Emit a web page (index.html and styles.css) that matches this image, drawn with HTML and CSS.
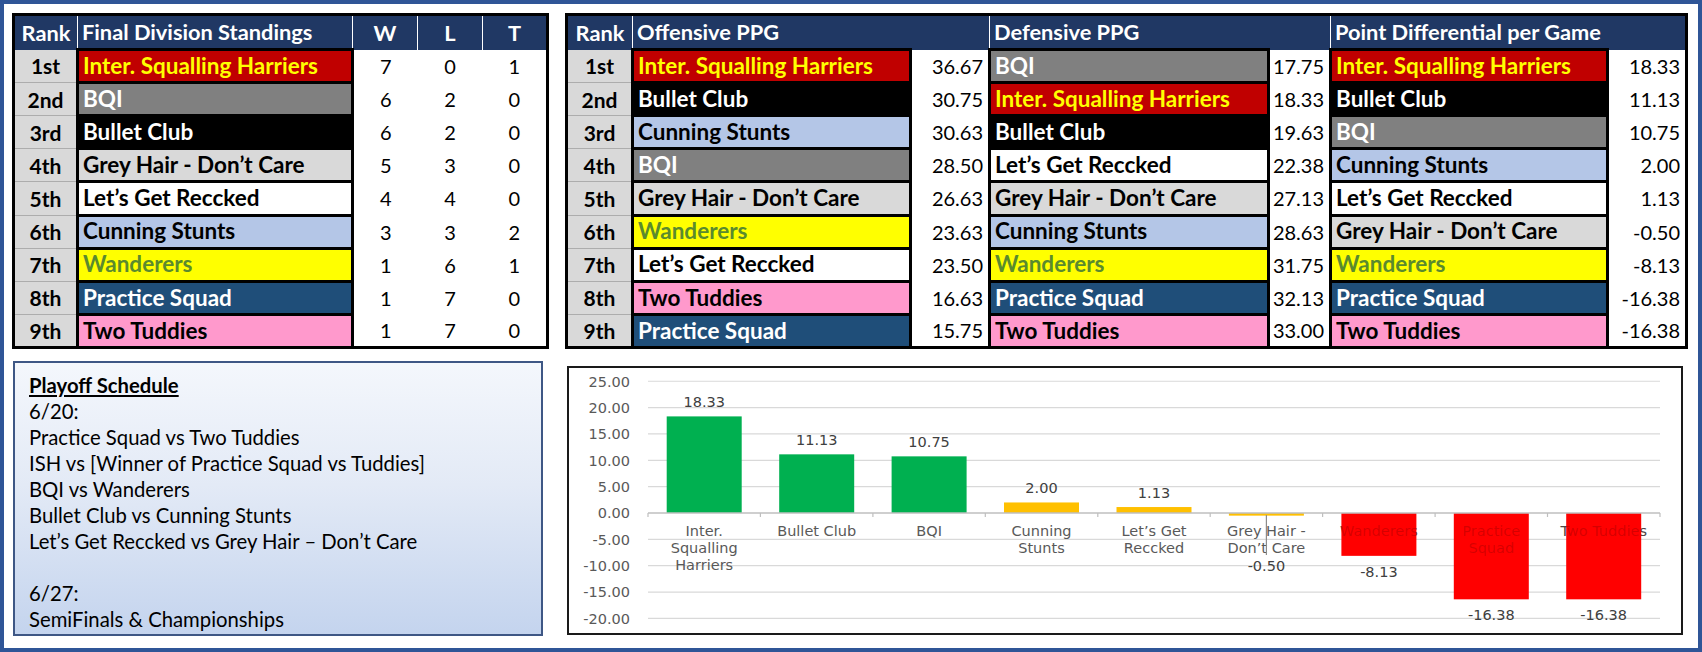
FILE: index.html
```html
<!DOCTYPE html>
<html>
<head>
<meta charset="utf-8">
<link rel="stylesheet" href="styles.css">
</head>
<body>
<div class="frame">
  <div class="layout">
    <table class="tbl standings">
      <colgroup><col class="c-rank"><col class="c-team"><col class="c-w"><col class="c-w"><col class="c-w"></colgroup>
      <thead>
        <tr><th class="h-rank">Rank</th><th class="h-left">Final Division Standings</th><th>W</th><th>L</th><th>T</th></tr>
      </thead>
      <tbody>
        <tr><td class="rank">1st</td><td class="team ish">Inter. Squalling Harriers</td><td class="num">7</td><td class="num">0</td><td class="num">1</td></tr>
        <tr><td class="rank">2nd</td><td class="team bqi">BQI</td><td class="num">6</td><td class="num">2</td><td class="num">0</td></tr>
        <tr><td class="rank">3rd</td><td class="team bc">Bullet Club</td><td class="num">6</td><td class="num">2</td><td class="num">0</td></tr>
        <tr><td class="rank">4th</td><td class="team gh">Grey Hair - Don’t Care</td><td class="num">5</td><td class="num">3</td><td class="num">0</td></tr>
        <tr><td class="rank">5th</td><td class="team lgr">Let’s Get Reccked</td><td class="num">4</td><td class="num">4</td><td class="num">0</td></tr>
        <tr><td class="rank">6th</td><td class="team cs">Cunning Stunts</td><td class="num">3</td><td class="num">3</td><td class="num">2</td></tr>
        <tr><td class="rank">7th</td><td class="team wan">Wanderers</td><td class="num">1</td><td class="num">6</td><td class="num">1</td></tr>
        <tr><td class="rank">8th</td><td class="team ps">Practice Squad</td><td class="num">1</td><td class="num">7</td><td class="num">0</td></tr>
        <tr><td class="rank">9th</td><td class="team tt">Two Tuddies</td><td class="num">1</td><td class="num">7</td><td class="num">0</td></tr>
      </tbody>
    </table>

    <table class="tbl ppg">
      <colgroup><col class="p-rank"><col class="p-team"><col class="p-val"><col class="p-team2"><col class="p-val2"><col class="p-team3"><col class="p-val"></colgroup>
      <thead>
        <tr><th class="h-rank">Rank</th><th class="h-left" colspan="2">Offensive PPG</th><th class="h-left" colspan="2">Defensive PPG</th><th class="h-left" colspan="2">Point Differential per Game</th></tr>
      </thead>
      <tbody>
        <tr><td class="rank">1st</td><td class="team ish">Inter. Squalling Harriers</td><td class="val">36.67</td><td class="team bqi">BQI</td><td class="val">17.75</td><td class="team ish">Inter. Squalling Harriers</td><td class="val">18.33</td></tr>
        <tr><td class="rank">2nd</td><td class="team bc">Bullet Club</td><td class="val">30.75</td><td class="team ish">Inter. Squalling Harriers</td><td class="val">18.33</td><td class="team bc">Bullet Club</td><td class="val">11.13</td></tr>
        <tr><td class="rank">3rd</td><td class="team cs">Cunning Stunts</td><td class="val">30.63</td><td class="team bc">Bullet Club</td><td class="val">19.63</td><td class="team bqi">BQI</td><td class="val">10.75</td></tr>
        <tr><td class="rank">4th</td><td class="team bqi">BQI</td><td class="val">28.50</td><td class="team lgr">Let’s Get Reccked</td><td class="val">22.38</td><td class="team cs">Cunning Stunts</td><td class="val">2.00</td></tr>
        <tr><td class="rank">5th</td><td class="team gh">Grey Hair - Don’t Care</td><td class="val">26.63</td><td class="team gh">Grey Hair - Don’t Care</td><td class="val">27.13</td><td class="team lgr">Let’s Get Reccked</td><td class="val">1.13</td></tr>
        <tr><td class="rank">6th</td><td class="team wan">Wanderers</td><td class="val">23.63</td><td class="team cs">Cunning Stunts</td><td class="val">28.63</td><td class="team gh">Grey Hair - Don’t Care</td><td class="val">-0.50</td></tr>
        <tr><td class="rank">7th</td><td class="team lgr">Let’s Get Reccked</td><td class="val">23.50</td><td class="team wan">Wanderers</td><td class="val">31.75</td><td class="team wan">Wanderers</td><td class="val">-8.13</td></tr>
        <tr><td class="rank">8th</td><td class="team tt">Two Tuddies</td><td class="val">16.63</td><td class="team ps">Practice Squad</td><td class="val">32.13</td><td class="team ps">Practice Squad</td><td class="val">-16.38</td></tr>
        <tr><td class="rank">9th</td><td class="team ps">Practice Squad</td><td class="val">15.75</td><td class="team tt">Two Tuddies</td><td class="val">33.00</td><td class="team tt">Two Tuddies</td><td class="val">-16.38</td></tr>
      </tbody>
    </table>

    <div class="playoff">
      <div class="pl-title">Playoff Schedule</div>
      <div>6/20:</div>
      <div>Practice Squad vs Two Tuddies</div>
      <div>ISH vs [Winner of Practice Squad vs Tuddies]</div>
      <div>BQI vs Wanderers</div>
      <div>Bullet Club vs Cunning Stunts</div>
      <div>Let’s Get Reccked vs Grey Hair – Don’t Care</div>
      <div class="blank">&nbsp;</div>
      <div>6/27:</div>
      <div>SemiFinals &amp; Championships</div>
    </div>

    <div class="chart">
      <svg class="chart-svg" width="1112" height="265" viewBox="0 0 1112 265">
        <g class="grid-lines">
          <line x1="79" x2="1091" y1="13.25" y2="13.25"/>
          <line x1="79" x2="1091" y1="39.6" y2="39.6"/>
          <line x1="79" x2="1091" y1="65.95" y2="65.95"/>
          <line x1="79" x2="1091" y1="92.3" y2="92.3"/>
          <line x1="79" x2="1091" y1="118.65" y2="118.65"/>
          <line x1="79" x2="1091" y1="171.35" y2="171.35"/>
          <line x1="79" x2="1091" y1="197.7" y2="197.7"/>
          <line x1="79" x2="1091" y1="224.05" y2="224.05"/>
          <line x1="79" x2="1091" y1="250.4" y2="250.4"/>
        </g>
        <g class="axis-labels">
          <text x="61" y="18.5">25.00</text>
          <text x="61" y="44.8">20.00</text>
          <text x="61" y="71.2">15.00</text>
          <text x="61" y="97.5">10.00</text>
          <text x="61" y="123.9">5.00</text>
          <text x="61" y="150.2">0.00</text>
          <text x="61" y="176.6">-5.00</text>
          <text x="61" y="202.9">-10.00</text>
          <text x="61" y="229.3">-15.00</text>
          <text x="61" y="255.6">-20.00</text>
        </g>
        <g class="cat-labels">
          <text x="135.2" y="168">Inter.</text>
          <text x="135.2" y="185">Squalling</text>
          <text x="135.2" y="202">Harriers</text>
          <text x="247.7" y="168">Bullet Club</text>
          <text x="360.1" y="168">BQI</text>
          <text x="472.5" y="168">Cunning</text>
          <text x="472.5" y="185">Stunts</text>
          <text x="585" y="168">Let’s Get</text>
          <text x="585" y="185">Reccked</text>
          <text x="697.4" y="168">Grey Hair -</text>
          <text x="697.4" y="185">Don’t Care</text>
          <text x="809.9" y="168">Wanderers</text>
          <text x="922.3" y="168">Practice</text>
          <text x="922.3" y="185">Squad</text>
          <text x="1034.7" y="168">Two Tuddies</text>
        </g>
        <g class="bars">
          <rect class="pos" x="97.7" y="48.4" width="75" height="96.6"/>
          <rect class="pos" x="210.2" y="86.34" width="75" height="58.66"/>
          <rect class="pos" x="322.6" y="88.35" width="75" height="56.65"/>
          <rect class="mid" x="435" y="134.46" width="75" height="10.54"/>
          <rect class="mid" x="547.5" y="139.04" width="75" height="5.96"/>
          <rect class="mid" x="659.9" y="145" width="75" height="2.64"/>
          <rect class="neg" x="772.4" y="145" width="75" height="42.85"/>
          <rect class="neg" x="884.8" y="145" width="75" height="86.32"/>
          <rect class="neg" x="997.2" y="145" width="75" height="86.32"/>
        </g>
        <g class="cat-labels ghost">
          <text x="809.9" y="168">Wanderers</text>
          <text x="922.3" y="168">Practice</text>
          <text x="922.3" y="185">Squad</text>
          <text x="1034.7" y="168">Two Tuddies</text>
        </g>
        <line class="zero-axis" x1="79" x2="1091" y1="145" y2="145"/>
        <g class="ticks">
          <line x1="79" x2="79" y1="145" y2="149"/>
          <line x1="191.4" x2="191.4" y1="145" y2="149"/>
          <line x1="303.9" x2="303.9" y1="145" y2="149"/>
          <line x1="416.3" x2="416.3" y1="145" y2="149"/>
          <line x1="528.8" x2="528.8" y1="145" y2="149"/>
          <line x1="641.2" x2="641.2" y1="145" y2="149"/>
          <line x1="753.6" x2="753.6" y1="145" y2="149"/>
          <line x1="866.1" x2="866.1" y1="145" y2="149"/>
          <line x1="978.5" x2="978.5" y1="145" y2="149"/>
          <line x1="1091" x2="1091" y1="145" y2="149"/>
        </g>
        <line class="leader" x1="697.4" x2="697.4" y1="147" y2="187"/>
        <g class="data-labels">
          <text x="135.2" y="38.9">18.33</text>
          <text x="247.7" y="76.8">11.13</text>
          <text x="360.1" y="78.8">10.75</text>
          <text x="472.5" y="125">2.00</text>
          <text x="585" y="129.5">1.13</text>
          <text x="697.4" y="203">-0.50</text>
          <text x="809.9" y="208.9">-8.13</text>
          <text x="922.3" y="252.3">-16.38</text>
          <text x="1034.7" y="252.3">-16.38</text>
        </g>
      </svg>
    </div>
  </div>
</div>
</body>
</html>
```

FILE: styles.css
```css
html, body {
  margin: 0;
  padding: 0;
  background: #ffffff;
}

.frame {
  width: 1702px;
  height: 652px;
  box-sizing: border-box;
  border: 4px solid #2F5597;
  background: #ffffff;
  padding: 9px 0 0 8px;
  font-family: "Lato", "Open Sans", sans-serif;
}

.layout {
  display: grid;
  grid-template-columns: 536px 1121px;
  grid-template-rows: 336px 275px;
  column-gap: 17px;
  row-gap: 12px;
}

/* ---------- tables ---------- */
.tbl {
  border-collapse: collapse;
  table-layout: fixed;
  border: 3px solid #000;
  font-family: "Lato", "Open Sans", sans-serif;
  font-size: 22px;
  line-height: 1;
  color: #000;
}

.standings { width: 536px; height: 336px; }
.ppg { width: 1121px; height: 336px; }

.c-rank { width: 64px; }
.c-team { width: 275px; }
.c-w { width: 65px; }

.p-rank { width: 66px; }
.p-team { width: 278px; }
.p-val { width: 79px; }
.p-team2 { width: 279px; }
.p-val2 { width: 62px; }
.p-team3 { width: 277px; }

.tbl thead tr { height: 35px; }
.tbl tbody tr { height: 33px; }

.tbl th {
  background: #203864;
  color: #ffffff;
  font-weight: 700;
  font-size: 21.8px;
  text-align: center;
  padding: 0 3px;
  border-left: 1px solid #ffffff;
  white-space: nowrap;
}

.tbl th.h-rank { border-left: none; }
.tbl th.h-left { text-align: left; padding-left: 4px; }

.tbl td {
  padding: 0;
  white-space: nowrap;
  overflow: hidden;
}

.rank {
  background: #D9D9D9;
  font-weight: 700;
  font-size: 21px;
  text-align: center;
  border-bottom: 1px solid #ADADAD;
}

.team {
  font-weight: 700;
  font-size: 22.5px;
  padding-left: 4px !important;
  border: 3px solid #000;
}

.num {
  text-align: center;
  font-weight: 400;
  font-size: 20px;
  background: #fff;
}

.val {
  text-align: right;
  font-weight: 400;
  font-size: 20px;
  background: #fff;
  padding-right: 5px !important;
}

.ish { background: #C00000; color: #FFFF00; }
.bqi { background: #808080; color: #ffffff; }
.bc  { background: #000000; color: #ffffff; }
.gh  { background: #D9D9D9; color: #000000; }
.lgr { background: #ffffff; color: #000000; }
.cs  { background: #B4C6E7; color: #000000; }
.wan { background: #FFFF00; color: #5A8A2E; }
.ps  { background: #1F4E79; color: #ffffff; }
.tt  { background: #FF99CC; color: #000000; }

/* ---------- playoff box ---------- */
.playoff {
  margin-left: 1px;
  width: 530px;
  height: 275px;
  box-sizing: border-box;
  border: 2px solid #3E5785;
  background: linear-gradient(to bottom, #F4F7FC 0%, #E3EAF6 45%, #C4D4EE 100%);
  padding: 9px 14px;
  font-size: 20.3px;
  line-height: 26px;
  color: #000;
}

.pl-title {
  font-weight: 700;
  text-decoration: underline;
}

/* ---------- chart ---------- */
.chart {
  margin-left: 2px;
  margin-top: 5px;
  width: 1116px;
  height: 269px;
  box-sizing: border-box;
  border: 2px solid #1a1a1a;
  background: #fff;
}

.chart-svg {
  display: block;
  font-family: "DejaVu Sans", "Verdana", sans-serif;
}

.grid-lines line {
  stroke: #D9D9D9;
  stroke-width: 1.2;
}

.zero-axis {
  stroke: #BFBFBF;
  stroke-width: 1.5;
}

.ticks line {
  stroke: #BFBFBF;
  stroke-width: 1.2;
}

.leader {
  stroke: #8C8C8C;
  stroke-width: 1.2;
}

.axis-labels text {
  font-size: 14.5px;
  fill: #595959;
  text-anchor: end;
}

.cat-labels text {
  font-size: 14.5px;
  fill: #595959;
  text-anchor: middle;
}

.cat-labels.ghost text {
  fill: #400000;
  fill-opacity: 0.22;
}

.data-labels text {
  font-size: 14.5px;
  fill: #404040;
  text-anchor: middle;
}

.bars .pos { fill: #00B050; }
.bars .mid { fill: #FFC000; }
.bars .neg { fill: #FF0000; }
```
